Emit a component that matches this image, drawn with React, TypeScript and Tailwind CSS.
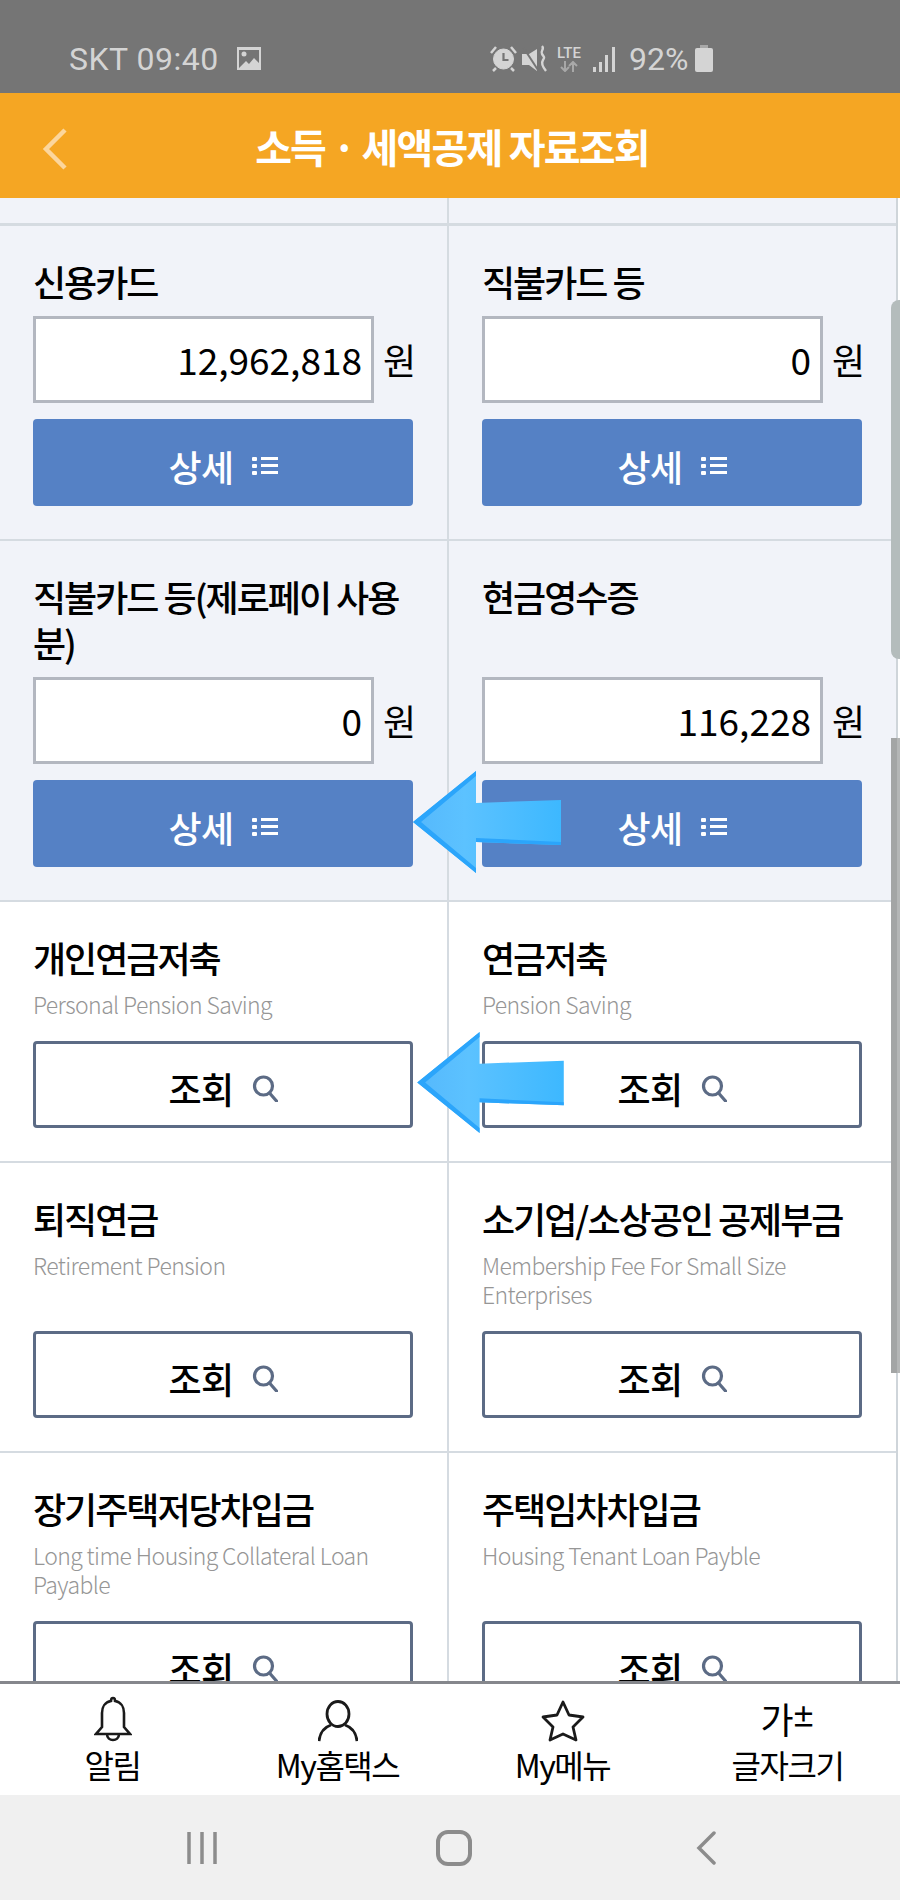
import { useId } from "react"

const kr = "font-['Noto_Sans_CJK_KR','Noto_Sans',sans-serif]"

function ListIcon() {
  return (
    <svg width="26" height="20" viewBox="0 0 26 20" fill="currentColor">
      <rect x="0" y="1" width="5" height="4" rx="1" />
      <rect x="0" y="8" width="5" height="4" rx="1" />
      <rect x="0" y="15" width="5" height="4" rx="1" />
      <rect x="9" y="1" width="17" height="3" />
      <rect x="9" y="8" width="17" height="3" />
      <rect x="9" y="15" width="17" height="3" />
    </svg>
  )
}

function SearchIcon() {
  return (
    <svg width="26" height="28" viewBox="0 0 26 28" fill="none" stroke="#5c6b85" strokeWidth="3.2">
      <circle cx="11.5" cy="12" r="9" />
      <path d="M17.5 19l7 8" strokeLinecap="round" />
    </svg>
  )
}

function AmountCell({ title, amount }: { title: string; amount: string }) {
  return (
    <div className="flex flex-col pl-[33px] pr-[38px] [&:nth-child(odd)]:pr-[34px] pt-[32px] pb-[33px] bg-[#f1f3f9] border-b-2 border-[#d5dbe1] [&:nth-child(odd)]:border-r-2">
      <h3 className="text-[36px] leading-[46px] font-medium tracking-[-2px] text-black">{title}</h3>
      <div className="flex items-center justify-between mt-auto pt-[12px]">
        <div className="w-[341px] h-[87px] flex items-center justify-end bg-white border-[3px] border-[#b3b7c0] pr-[9px] text-[37px] font-normal text-black">
          {amount}
        </div>
        <span className="text-[36px] font-normal text-black -mr-[3px] -mt-[2px]">원</span>
      </div>
      <button className="mt-4 h-[87px] w-full shrink-0 flex items-center justify-center gap-[18px] pt-[6px] rounded bg-[#5581c5] text-white text-[36px] font-medium tracking-[-0.5px]">
        상세 <ListIcon />
      </button>
    </div>
  )
}

function LookupCell({ title, sub }: { title: string; sub: string }) {
  return (
    <div className="flex flex-col pl-[33px] pr-[38px] [&:nth-child(odd)]:pr-[34px] pt-[32px] pb-[33px] bg-white border-b-2 border-[#d5dbe1] [&:nth-child(odd)]:border-r-2">
      <h3 className="text-[36px] leading-[46px] font-medium tracking-[-2px] text-black">{title}</h3>
      <p className="mt-[10px] mb-[22px] text-[23px] leading-[29px] tracking-[-0.6px] text-[#969696] font-light">{sub}</p>
      <button className="mt-auto h-[87px] w-full shrink-0 flex items-center justify-center gap-[18px] pt-[6px] rounded border-[3px] border-[#5c6b85] bg-white text-black text-[36px] font-medium tracking-[-0.5px]">
        조회 <SearchIcon />
      </button>
    </div>
  )
}

function Arrow({ className, w, h }: { className: string; w: number; h: number }) {
  const id = useId()
  return (
    <svg className={className} width={w} height={h} viewBox="0 0 148 102">
      <defs>
        <linearGradient id={id} x1="0" y1="0" x2="1" y2="0">
          <stop offset="0" stopColor="#55b8fc" />
          <stop offset="0.35" stopColor="#5cc2ff" />
          <stop offset="1" stopColor="#3db8ff" />
        </linearGradient>
      </defs>
      <path d="M0 51L63 0V32L148 29V74L63 71V102Z" fill={`url(#${id})`} />
      <path d="M0 51L63 0V5L8 51L63 97V102Z" fill="#2ba5fb" />
      <path d="M63 71L148 74V71L63 67Z" fill="#2ba5fb" />
    </svg>
  )
}

function StatusBar() {
  return (
    <div className="h-[93px] shrink-0 bg-[#757575] flex items-center pt-[24px] pl-[69px] text-[#d4d4d4] font-['Roboto',sans-serif] text-[32px] leading-none">
      <span className="w-[167px] tracking-[0.5px]">SKT 09:40</span>
      <svg width="26" height="25" viewBox="0 0 26 25">
        <path d="M1 1h24v23H1z" fill="#d4d4d4" />
        <path d="M3 4h20v13l-5-5-5 6-3-3-7 7z" fill="#757575" />
        <circle cx="8" cy="8" r="2.5" fill="#d4d4d4" />
      </svg>
      <div className="ml-[228px] flex items-center">
        <svg width="27" height="27" viewBox="0 0 27 27" fill="#d4d4d4" stroke="#d4d4d4">
          <circle cx="13.5" cy="14" r="10" strokeWidth="1" />
          <path d="M13.5 8v7h5" fill="none" stroke="#757575" strokeWidth="2.2" />
          <path d="M1 8l5-6M26 8l-5-6M6 23l-3 3M21 23l3 3" fill="none" strokeWidth="2.5" />
        </svg>
        <svg className="ml-[5px]" width="26" height="27" viewBox="0 0 26 27" fill="#d4d4d4">
          <path d="M0 9h7l8-5v22l-8-6H0z" />
          <path d="M1 2l15 23" stroke="#757575" strokeWidth="2" />
          <path d="M20 1c3 3-2 5 0 8s3 3 1 6-1 6 3 11" fill="none" stroke="#d4d4d4" strokeWidth="2.4" />
        </svg>
        <div className="ml-[8px] w-[26px] flex flex-col items-center text-[15px] leading-[14px] font-medium">
          <span>LTE</span>
          <svg className="mt-[1px]" width="20" height="11" viewBox="0 0 20 11" fill="none" stroke="#a8a8a8" strokeWidth="2">
            <path d="M6 0v10M2 6l4 4 4-4M14 11V1M10 5l4-4 4 4" />
          </svg>
        </div>
        <svg className="ml-[11px]" width="23" height="26" viewBox="0 0 23 26" fill="#d4d4d4">
          <rect x="0" y="21" width="3" height="5" />
          <rect x="6" y="16" width="3" height="10" />
          <rect x="12" y="9" width="3" height="17" />
          <rect x="19" y="1" width="3" height="25" />
        </svg>
        <span className="ml-[13px] w-[58px]">92%</span>
        <svg className="ml-[8px]" width="18" height="27" viewBox="0 0 18 27" fill="#d4d4d4">
          <rect x="5" y="0" width="8" height="4" fill="#a8a8a8" />
          <rect x="0" y="3" width="18" height="24" rx="2" />
        </svg>
      </div>
    </div>
  )
}

function BottomTab({ icon, label }: { icon: React.ReactNode; label: string }) {
  return (
    <div className="flex flex-col items-center">
      <div className="h-[50px] flex items-end justify-center">{icon}</div>
      <span className="mt-[2px] text-[32px] leading-[40px] tracking-[-1.5px] text-black">{label}</span>
    </div>
  )
}

export default function App() {
  return (
    <div className={`relative w-[900px] h-[1900px] flex flex-col overflow-hidden bg-white ${kr}`}>
      <StatusBar />

      <header className="h-[105px] shrink-0 relative flex items-center justify-center bg-[#f5a623]">
        <svg className="absolute left-[42px] top-[35px]" width="26" height="42" viewBox="0 0 26 42" fill="none" stroke="#fcd69c" strokeWidth="4.5">
          <path d="M23 2L4 21l19 19" />
        </svg>
        <h1 className="ml-1 text-[40px] font-bold tracking-[-1.8px] text-white">소득 · 세액공제 자료조회</h1>
      </header>

      <main className="flex-1 min-h-0 overflow-hidden relative">
        <div className="grid grid-cols-[449px_451px]">
          <div className="h-[28px] bg-[#f1f3f9] border-b-[3px] border-r-2 border-[#d5dbe1]" />
          <div className="h-[28px] bg-[#f1f3f9] border-b-[3px] border-[#d5dbe1]" />
          <AmountCell title="신용카드" amount="12,962,818" />
          <AmountCell title="직불카드 등" amount="0" />
          <AmountCell title="직불카드 등(제로페이 사용분)" amount="0" />
          <AmountCell title="현금영수증" amount="116,228" />
          <LookupCell title="개인연금저축" sub="Personal Pension Saving" />
          <LookupCell title="연금저축" sub="Pension Saving" />
          <LookupCell title="퇴직연금" sub="Retirement Pension" />
          <LookupCell title="소기업/소상공인 공제부금" sub="Membership Fee For Small Size Enterprises" />
          <LookupCell title="장기주택저당차입금" sub="Long time Housing Collateral Loan Payable" />
          <LookupCell title="주택임차차입금" sub="Housing Tenant Loan Payble" />
        </div>
        <div className="absolute left-[896px] top-0 bottom-0 w-[2px] bg-[#cfd5da]" />
        <div className="absolute left-[898px] top-0 bottom-0 w-[2px] bg-white" />
        <div className="absolute left-[891px] top-[102px] w-[9px] h-[359px] rounded-l-lg bg-[#b4bcbc]" />
        <div className="absolute left-[891px] top-[540px] w-[6px] h-[635px] bg-[#a3a5a5]" />
        <div className="absolute left-[897px] top-[540px] w-[3px] h-[635px] bg-[#b4b6b6]" />
        <Arrow className="absolute left-[413px] top-[573px]" w={148} h={102} />
        <Arrow className="absolute left-[416px] top-[834px]" w={149} h={101} />
      </main>

      <footer className="h-[114px] shrink-0 grid grid-cols-4 bg-white border-t-[3px] border-[#85878c] pt-[8px]">
        <BottomTab
          label="알림"
          icon={
            <svg width="38" height="46" viewBox="0 0 38 46" fill="none" stroke="#1a1a1a" strokeWidth="2.6">
              <path d="M19 2c-1.500 0-2 1-2 3-6 1-9 6-9 12v14l-6 7h34l-6-7V17c0-6-3-11-9-12 0-2-.5-3-2-3zM13 38c0 8 12 8 12 0" />
            </svg>
          }
        />
        <BottomTab
          label="My홈택스"
          icon={
            <svg width="40" height="42" viewBox="0 0 40 42" fill="none" stroke="#1a1a1a" strokeWidth="2.8">
              <ellipse cx="20" cy="14" rx="11" ry="12.500" />
              <path d="M1 41c1-9 6-14 12-16M39 41c-1-9-6-14-12-16" />
            </svg>
          }
        />
        <BottomTab
          label="My메뉴"
          icon={
            <svg width="44" height="42" viewBox="0 0 44 42" fill="none" stroke="#1a1a1a" strokeWidth="2.8" strokeLinejoin="round">
              <path d="M22 2l6 13 14 2-10 10 3 13-13-6-13 6 3-13L2 17l14-2z" />
            </svg>
          }
        />
        <BottomTab
          label="글자크기"
          icon={
            <div className="mb-[6px] flex items-start leading-none text-black font-normal text-[36px] tracking-[-1px]">
              가<span className="text-[24px] font-bold -ml-[1px] leading-[32px]">±</span>
            </div>
          }
        />
      </footer>

      <nav className="h-[105px] shrink-0 bg-[#f0f0f0] grid grid-cols-3 items-center pl-[76px] pr-[68px]">
        <svg className="justify-self-center" width="32" height="34" viewBox="0 0 32 34" stroke="#8c8c8c" strokeWidth="3.5">
          <path d="M3 1v32M16 1v32M29 1v32" />
        </svg>
        <svg className="justify-self-center" width="36" height="36" viewBox="0 0 36 36" fill="none" stroke="#8c8c8c" strokeWidth="4">
          <rect x="2" y="2" width="32" height="32" rx="10" />
        </svg>
        <svg className="justify-self-center" width="20" height="34" viewBox="0 0 20 34" fill="none" stroke="#8c8c8c" strokeWidth="3.500" strokeLinecap="round">
          <path d="M18 2L3 17l15 15" />
        </svg>
      </nav>
    </div>
  )
}
